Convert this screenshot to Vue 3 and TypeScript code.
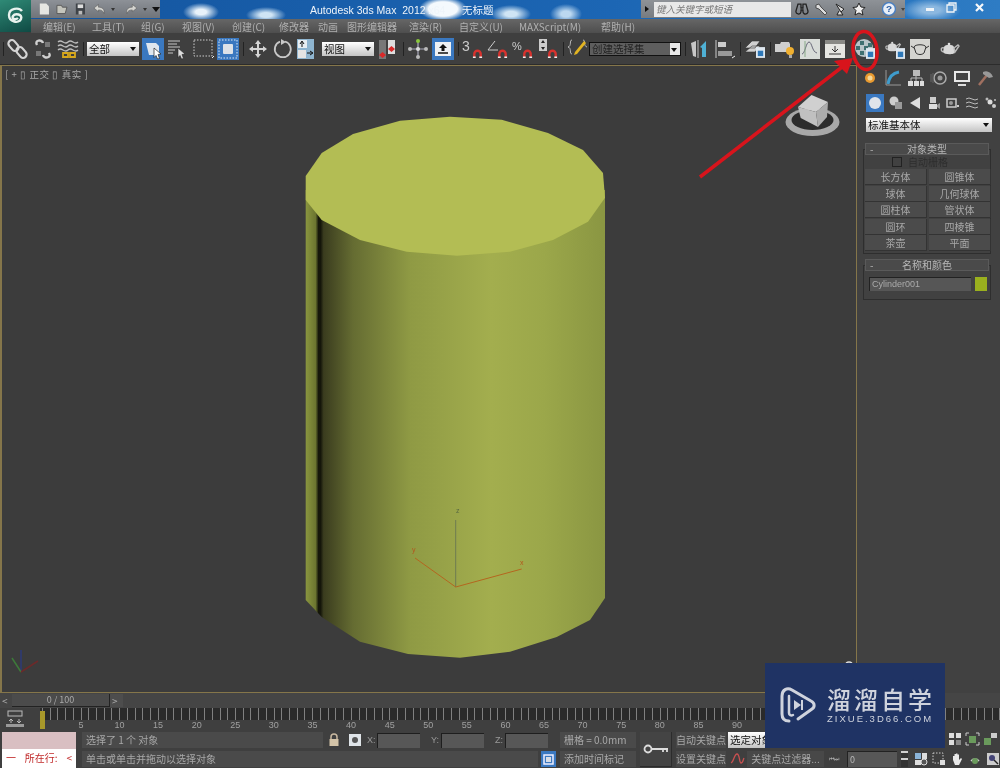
<script setup lang="ts">
interface MenuItem {
  label: string;
  width: number;
}

const menus: MenuItem[] = [
  { label: "编辑(E)", width: 49 },
  { label: "工具(T)", width: 49 },
  { label: "组(G)", width: 41 },
  { label: "视图(V)", width: 50 },
  { label: "创建(C)", width: 47 },
  { label: "修改器", width: 39 },
  { label: "动画", width: 29 },
  { label: "图形编辑器", width: 62 },
  { label: "渲染(R)", width: 50 },
  { label: "自定义(U)", width: 60 },
  { label: "MAXScript(M)", width: 82 },
  { label: "帮助(H)", width: 40 },
];

const objectTypes = ["长方体", "圆锥体", "球体", "几何球体", "圆柱体", "管状体", "圆环", "四棱锥", "茶壶", "平面"];

const rulerLabels = [0, 5, 10, 15, 20, 25, 30, 35, 40, 45, 50, 55, 60, 65, 70, 75, 80, 85, 90, 95, 100];

const topFace =
  "305.7,176 321.7,153 353,134 400,120.7 450,116.7 501.7,119.7 548,133 583,150 603,173 605,197.7 588,221.7 553,240 510,251.7 457,255.7 406.7,251.7 360,240 321.7,220 305.7,200";
const body =
  "305.7,190 605,190 605,598 590,620 556.7,637 510,651.7 460,657.7 408,654 360,641.7 321.7,617 305.7,600";
</script>

<template>
  <div class="app">
    <svg class="defs" width="0" height="0">
      <symbol id="magnet" viewBox="0 0 12 12">
        <path d="M2.5 11V6.5a3.5 3.5 0 0 1 7 0V11" fill="none" stroke="#d8322e" stroke-width="2.6" />
        <path d="M1 10h3M8 10h3" stroke="#eee" stroke-width="1.6" />
      </symbol>
      <symbol id="teapot" viewBox="0 0 22 22">
        <path d="M5 9c1-3 9-3 10 0l1 5c0 3-11 3-12 0z" fill="#d8d8d8" />
        <path d="M15 10l4-3 1 1-4 6zM5 10c-3-1-4 2-1 4" fill="none" stroke="#bbb" stroke-width="1.4" />
        <circle cx="10" cy="6" r="1.3" fill="#ddd" />
      </symbol>
      <symbol id="page" viewBox="0 0 10 12">
        <rect width="10" height="12" fill="#dfe8f0" />
        <rect x="2" y="4" width="6" height="6" fill="#2e78b8" />
      </symbol>
    </svg>

    <div class="top">
      <div class="app-button">
        <svg width="24" height="22" viewBox="0 0 24 22">
          <path d="M18 6c-3-4-13-3-13 4s10 9 12 4-6-6-8-3 3 4 5 2" fill="none" stroke="#e8f2ee" stroke-width="2.4" />
        </svg>
      </div>
      <div class="top-right">
        <div class="titlebar">
          <div class="quick">
            <svg class="qa" width="14" height="14" viewBox="0 0 14 14"><path d="M2 1h7l3 3v9H2z" fill="#e6e6e2" /></svg>
            <svg class="qa" width="14" height="14" viewBox="0 0 14 14"><path d="M1 3h5l1 2h5l-2 7H1z" fill="#c4c4bc" stroke="#555" /></svg>
            <svg class="qa" width="14" height="14" viewBox="0 0 14 14"><path d="M2 1h10v12H2z" fill="#3f4348" /><path d="M4 2h6v4H4z" fill="#ddd" /><path d="M5 9h4v4H5z" fill="#bbb" /></svg>
            <svg class="qa wide" width="14" height="14" viewBox="0 0 14 14"><path d="M1 6l5-4v3c4 0 7 2 6 7-1-3-3-4-6-4v2z" fill="#d4d4d0" stroke="#555" stroke-width=".6" /></svg>
            <span class="qa-drop"></span>
            <svg class="qa wide" width="14" height="14" viewBox="0 0 14 14"><path d="M13 6L8 2v3C4 5 1 7 2 12c1-3 3-4 6-4v2z" fill="#d4d4d0" stroke="#555" stroke-width=".6" /></svg>
            <span class="qa-drop"></span>
            <span class="qa-menu"></span>
          </div>
          <div class="title">
            <span class="title-app">Autodesk 3ds Max&nbsp; 2012 x64</span>
            <span class="title-doc">无标题</span>
          </div>
          <div class="info">
            <span class="info-arrow"></span>
            <div class="search">键入关键字或短语</div>
            <svg class="info-ic" width="14" height="14" viewBox="0 0 14 14"><path d="M3 2h3v4h2V2h3l2 7a2.500 2.500 0 0 1-5 1V8H6v2a2.500 2.500 0 0 1-5-1z" fill="none" stroke="#222" stroke-width="1.300" /></svg>
            <svg class="info-ic" width="14" height="14" viewBox="0 0 14 14"><path d="M2 3l3-1 2 3 6 6-2 2-6-6-3-1z" fill="#ddd" stroke="#333" stroke-width=".8" /></svg>
            <svg class="info-ic" width="14" height="14" viewBox="0 0 14 14"><path d="M3 2l8 5-3 3zM6 9l-2 4h6l-2-3" fill="#ddd" stroke="#222" /></svg>
            <svg class="info-ic" width="14" height="14" viewBox="0 0 14 14"><path d="M7 1l2 4 4 .5-3 3 1 4.500-4-2-4 2 1-4.500-3-3L5 5z" fill="#eee" stroke="#222" /></svg>
            <svg class="help" width="14" height="14" viewBox="0 0 14 14">
              <circle cx="7" cy="7" r="6.500" fill="#e8eef6" stroke="#4b7fc0" stroke-width="1.400" />
              <text x="7" y="10.500" text-anchor="middle" class="help-q">?</text>
            </svg>
            <span class="help-drop"></span>
          </div>
          <div class="window-buttons">
            <svg width="95" height="14" viewBox="0 0 95 14">
              <rect x="21" y="7" width="8" height="3" fill="#f0f4f8" />
              <path d="M42 4h7v7h-7zM44 4V2h7v7h-2" fill="none" stroke="#f0f4f8" stroke-width="1.300" />
              <path d="M71 3l7 7M78 3l-7 7" stroke="#f6f8fa" stroke-width="2.200" />
            </svg>
          </div>
        </div>
        <div class="menubar">
          <span v-for="m in menus" :key="m.label" class="menu-item" :style="{ width: m.width + 'px' }">{{ m.label }}</span>
        </div>
      </div>
    </div>

    <div class="toolbar">
      <span class="sep sep-first"></span>
      <svg class="tool" viewBox="0 0 22 22"><g fill="none" stroke="#d4d4d4" stroke-width="2.200"><rect x="3" y="1.500" width="7" height="12" rx="3.500" transform="rotate(-40 6.500 7.500)" /><rect x="11" y="8.500" width="7" height="12" rx="3.500" transform="rotate(-40 14.500 14.500)" /></g></svg>
      <svg class="tool" viewBox="0 0 22 22"><path d="M5 7C2 2 10 1 11 5M17 15c3 5-5 6-6 2" fill="none" stroke="#d0d0d0" stroke-width="2.400" /><path d="M13 4h5v5h-5zM4 13h5v5H4z" fill="#777" /></svg>
      <svg class="tool" viewBox="0 0 22 22"><path d="M1 4q2-2 5 0t5 0 5 0 5 0M1 8q2-2 5 0t5 0 5 0 5 0M1 12q2-2 5 0t5 0 5 0 5 0" fill="none" stroke="#bdbdbd" stroke-width="1.300" /><path d="M6 15h5v4H6zM13 15h5v4h-5z" fill="none" stroke="#d8a81c" stroke-width="1.800" /></svg>
      <span class="sep"></span>
      <div class="combo combo-all">全部<i class="caret"></i></div>
      <span class="active">
        <svg class="tool" viewBox="0 0 22 22"><path d="M4 5h10l3 3v9H7z" fill="#dfe6ee" /><path d="M12 10l7 6-3 .5 1.500 4-2 .5-1.500-3.500-2 2z" fill="#fff" stroke="#222" stroke-width=".7" /></svg>
      </span>
      <svg class="tool" viewBox="0 0 22 22"><path d="M1 3h12M1 6h9M1 9h12M1 12h7M1 15h5" stroke="#c8c8c8" stroke-width="1.200" /><path d="M11 10l7 6-3 .5 1.500 4-2 .5-1.500-3.500-2 2z" fill="#ddd" stroke="#222" stroke-width=".6" /></svg>
      <svg class="tool" viewBox="0 0 22 22"><rect x="2" y="2" width="18" height="16" fill="none" stroke="#ccc" stroke-dasharray="1.500 1.500" /><path d="M20 20l2-2" stroke="#eee" /></svg>
      <span class="active">
        <svg class="tool" viewBox="0 0 22 22"><rect x="2" y="2" width="18" height="18" fill="none" stroke="#dce8f4" stroke-dasharray="1.500 1.500" /><rect x="6" y="6" width="10" height="10" rx="1" fill="#dde2e8" /></svg>
      </span>
      <span class="sep"></span>
      <svg class="tool" viewBox="0 0 22 22"><path d="M11 2l3 4h-2v4h4V8l4 3-4 3v-2h-4v4h2l-3 4-3-4h2v-4H6v2l-4-3 4-3v2h4V6H8z" fill="#d4d4d4" /></svg>
      <svg class="tool" viewBox="0 0 22 22"><path d="M13 3.500a8 8 0 1 1-5 .2" fill="none" stroke="#c8c8c8" stroke-width="1.800" /><path d="M9 1l5 3-5 3z" fill="#c8c8c8" /></svg>
      <svg class="tool" viewBox="0 0 22 22"><rect x="0" y="1" width="17" height="20" fill="#8fb5d0" /><rect x="1" y="2" width="9" height="8" fill="#e8eef2" /><rect x="1" y="12" width="8" height="8" fill="#e4e4e4" /><path d="M5 9V4M3 6l2-3 2 3M10 15h5M13 13l3 2-3 2" stroke="#111" fill="none" /></svg>
      <div class="combo combo-view">视图<i class="caret"></i></div>
      <svg class="tool" viewBox="0 0 22 22"><rect x="2" y="2" width="7" height="19" fill="#777" /><rect x="11" y="2" width="7" height="14" fill="#ddd" /><path d="M2 17l3.500-3 3.500 3-3.500 3zM11 11l3.500-3 3.500 3-3.500 3z" fill="#d82a2a" /></svg>
      <span class="sep"></span>
      <svg class="tool" viewBox="0 0 22 22"><path d="M11 3v16M3 11h16" stroke="#aab" stroke-width="1.200" /><circle cx="11" cy="3" r="2" fill="#8ac83c" /><circle cx="3" cy="11" r="2" fill="#bbb" /><circle cx="19" cy="11" r="2" fill="#bbb" /><circle cx="11" cy="11" r="2" fill="#ddd" /><circle cx="11" cy="19" r="2" fill="#bbb" /></svg>
      <span class="active">
        <svg class="tool" viewBox="0 0 22 22"><rect x="3" y="4" width="16" height="14" fill="#eef1f4" /><path d="M11 6l4 4h-2.500v3h-3v-3H7z" fill="#111" /><path d="M6 15h10" stroke="#111" stroke-width="1.500" /></svg>
      </span>
      <span class="sep"></span>
      <div class="snap"><span class="snap-num">3</span><svg class="snap-magnet" viewBox="0 0 12 12"><use href="#magnet" /></svg></div>
      <div class="snap"><svg class="snap-glyph" viewBox="0 0 12 12"><path d="M1 11L8 2M1 11h10" stroke="#ccc" fill="none" /></svg><svg class="snap-magnet" viewBox="0 0 12 12"><use href="#magnet" /></svg></div>
      <div class="snap"><span class="snap-num small">%</span><svg class="snap-magnet" viewBox="0 0 12 12"><use href="#magnet" /></svg></div>
      <div class="snap"><svg class="snap-glyph" viewBox="0 0 12 12"><path d="M2 0h8v12H2z" fill="#ccc" /><path d="M6 1l2 3H4zM6 11L4 8h4z" fill="#222" /></svg><svg class="snap-magnet" viewBox="0 0 12 12"><use href="#magnet" /></svg></div>
      <span class="sep"></span>
      <svg class="tool" viewBox="0 0 22 22"><path d="M5 2C2 2 5 8 1 9c4 1 1 7 4 7M16 2c3 0 0 6 4 7" fill="none" stroke="#bbb" /><path d="M8 14L17 3l2 2-9 11-3 1z" fill="#e2b422" /></svg>
      <div class="combo combo-set">创建选择集<i class="caret"></i></div>
      <span class="sep"></span>
      <svg class="tool" viewBox="0 0 22 22"><path d="M2 5l5-2v16l-3-1z" fill="#c8c8c8" /><path d="M9 2v18" stroke="#bbb" /><path d="M17 3l-6 6 2 1v9h4z" fill="#4fb0d4" /></svg>
      <svg class="tool" viewBox="0 0 22 22"><path d="M2 2v18" stroke="#ccc" /><rect x="4" y="4" width="8" height="5" fill="#ccc" /><rect x="4" y="13" width="14" height="5" fill="#999" /><path d="M18 20l3-2" stroke="#eee" /></svg>
      <span class="sep"></span>
      <svg class="tool" viewBox="0 0 22 22"><path d="M1 10l7-7h8l-5 7zM1 14l7-6h8l-5 6z" fill="#d0d0d0" stroke="#333" stroke-width=".6" /><use href="#page" x="12" y="9" width="9" height="11" /></svg>
      <span class="sep"></span>
      <svg class="tool" viewBox="0 0 22 22"><path d="M1 6h5l1-2h8l1 2v8H1z" fill="#cfcfcf" /><circle cx="16" cy="13" r="4" fill="#f0b030" /><rect x="15" y="17" width="3" height="3" fill="#aaa" /></svg>
      <svg class="tool" viewBox="0 0 22 22"><rect x="1" y="1" width="20" height="20" fill="#d8dcd8" /><path d="M3 16c3 0 4-12 7-12s3 10 8 11" fill="none" stroke="#667" /><path d="M6 3v16" stroke="#8a8" /></svg>
      <svg class="tool" viewBox="0 0 22 22"><rect x="1" y="2" width="20" height="18" fill="#e6e6e2" /><rect x="1" y="2" width="20" height="4" fill="#8a8a86" /><path d="M11 8v5M8 11l3 3 3-3M5 16h12" stroke="#333" fill="none" /></svg>
      <svg class="tool tool-mat" viewBox="0 0 22 22">
        <circle cx="10" cy="10" r="9" fill="#b8c4c8" />
        <path d="M6 3h4v4H6zM14 5h4v4h-4zM2 8h4v4H2zM10 8h4v4h-4zM6 13h4v4H6zM14 13h3v3h-3z" fill="#3f6f70" />
        <use href="#page" x="12" y="10" width="9" height="11" />
      </svg>
      <svg class="tool tool-render" viewBox="0 0 22 22"><use href="#teapot" width="18" height="18" /><use href="#page" x="12" y="10" width="9" height="11" /></svg>
      <svg class="tool" viewBox="0 0 22 22"><rect x="1" y="1" width="20" height="20" fill="#d4d4d0" /><path d="M5 9c1-3 11-3 12 0l-2 6c-2 2-6 2-8 0zM5 10L2 8M17 10l3-2" fill="none" stroke="#333" /></svg>
      <svg class="tool tool-pot" viewBox="0 0 22 22"><use href="#teapot" width="22" height="22" /></svg>
    </div>

    <div class="main">
      <div class="viewport">
        <svg class="scene" viewBox="0 65 857 628">
          <defs>
            <linearGradient id="side" gradientUnits="userSpaceOnUse" x1="305" y1="0" x2="605" y2="0">
              <stop offset="0" stop-color="#8c9840" />
              <stop offset=".035" stop-color="#6c7530" />
              <stop offset=".045" stop-color="#15160a" />
              <stop offset=".052" stop-color="#15160a" />
              <stop offset=".062" stop-color="#3a3c1e" />
              <stop offset=".16" stop-color="#656c32" />
              <stop offset=".35" stop-color="#8f9a44" />
              <stop offset=".62" stop-color="#a3ae4e" />
              <stop offset=".8" stop-color="#9ba74a" />
              <stop offset="1" stop-color="#8a9642" />
            </linearGradient>
          </defs>
          <polygon :points="body" fill="url(#side)" />
          <polygon :points="topFace" fill="#b3bd54" />
          <path d="M455.700 587V520" stroke="#6e7c50" />
          <path d="M415 558l40.700 29 66-18" fill="none" stroke="#b4661f" />
          <text x="456" y="513" class="axis-z">z</text>
          <text x="412" y="552" class="axis-o">y</text>
          <text x="520" y="565" class="axis-o">x</text>

          <ellipse cx="812.500" cy="122" rx="27" ry="14" fill="#a8a8a8" />
          <ellipse cx="812.500" cy="120" rx="21" ry="10" fill="#2c2c2c" />
          <polygon points="811.500,95 828,102 816,112 798,107" fill="#d0d0d0" />
          <polygon points="798,107 816,112 818,127 800.700,118" fill="#c0c0c0" />
          <polygon points="816,112 828,102 827,117 818,127" fill="#adadad" />

          <path d="M21 672v-22" stroke="#2c3a78" stroke-width="1.500" />
          <path d="M21 672l-9-14" stroke="#3d7a3a" stroke-width="1.500" />
          <path d="M21 672l17-11" stroke="#6c2a2a" stroke-width="1.500" />
          <path d="M846 663q3-2 6 0" stroke="#ddd" stroke-width="1.500" fill="none" />
        </svg>
        <div class="view-label">[ + ▯ 正交 ▯ 真实 ]</div>
      </div>

      <div class="panel">
        <div class="panel-tabs">
          <svg class="tab" viewBox="0 0 18 18"><circle cx="9" cy="9" r="5" fill="#e89a30" /><circle cx="9" cy="9" r="2.500" fill="#f4d898" /></svg>
          <svg class="tab" viewBox="0 0 18 18"><path d="M2 1v15h15" fill="none" stroke="#999" /><path d="M4 15C5 8 9 4 15 3" fill="none" stroke="#3f9ccc" stroke-width="3" /></svg>
          <svg class="tab" viewBox="0 0 18 18"><rect x="6" y="1" width="7" height="6" fill="#bbb" /><rect x="1" y="12" width="5" height="5" fill="#ddd" /><rect x="7" y="12" width="5" height="5" fill="#ddd" /><rect x="13" y="12" width="4" height="5" fill="#ddd" /><path d="M9 7v5M4 12V9h11v3" stroke="#bbb" fill="none" /></svg>
          <svg class="tab" viewBox="0 0 18 18"><circle cx="10" cy="9" r="6" fill="none" stroke="#aaa" stroke-width="1.500" /><circle cx="10" cy="9" r="2.500" fill="#999" /><path d="M1 5v8M3 4v10" stroke="#666" /></svg>
          <svg class="tab" viewBox="0 0 18 18"><rect x="1" y="2" width="16" height="11" fill="#e8e8e8" /><rect x="3" y="4" width="12" height="7" fill="#444" /><path d="M5 16h8" stroke="#ddd" stroke-width="2" /></svg>
          <svg class="tab" viewBox="0 0 18 18"><path d="M3 16L11 6" stroke="#a07060" stroke-width="2.500" /><path d="M7 3c4-2 8 0 10 5l-4 1-6-4z" fill="#999" /></svg>
        </div>
        <div class="panel-sub">
          <span class="sub-active"><svg class="sub" viewBox="0 0 14 14"><circle cx="7" cy="7" r="6" fill="#dfe4ea" /></svg></span>
          <svg class="sub" viewBox="0 0 14 14"><circle cx="5" cy="5" r="4.500" fill="#ccc" /><rect x="6" y="6" width="7" height="7" fill="#999" /></svg>
          <svg class="sub" viewBox="0 0 14 14"><path d="M2 7l10-6v12z" fill="#ddd" /></svg>
          <svg class="sub" viewBox="0 0 14 14"><rect x="3" y="1" width="6" height="6" fill="#ccc" /><rect x="2" y="8" width="8" height="5" fill="#ddd" /><path d="M10 9l3-2v6l-3-2z" fill="#999" /></svg>
          <svg class="sub" viewBox="0 0 14 14"><rect x="1" y="3" width="9" height="8" fill="none" stroke="#ccc" stroke-width="1.500" /><circle cx="5" cy="7" r="2" fill="#999" /><rect x="11" y="9" width="2" height="2" fill="#ccc" /></svg>
          <svg class="sub" viewBox="0 0 14 14"><path d="M1 3q3-2 6 0t6 0M1 7q3-2 6 0t6 0M1 11q3-2 6 0t6 0" fill="none" stroke="#bbb" /></svg>
          <svg class="sub" viewBox="0 0 14 14"><circle cx="6" cy="6" r="2.500" fill="#ddd" /><circle cx="10" cy="10" r="2" fill="#ccc" /><circle cx="3" cy="3" r="1.500" fill="#bbb" /><circle cx="11" cy="4" r="1" fill="#bbb" /></svg>
        </div>
        <div class="combo combo-prim">标准基本体<i class="caret"></i></div>

        <div class="rollout">
          <div class="rollout-head"><span class="minus">-</span>对象类型</div>
          <div class="rollout-body">
            <label class="autogrid"><i class="check"></i>自动栅格</label>
            <div class="type-grid">
              <span v-for="t in objectTypes" :key="t" class="type-btn">{{ t }}</span>
            </div>
          </div>
        </div>

        <div class="rollout rollout-name">
          <div class="rollout-head"><span class="minus">-</span>名称和颜色</div>
          <div class="rollout-body name-body">
            <div class="name-input">Cylinder001</div>
            <div class="swatch"></div>
          </div>
        </div>
      </div>
    </div>

    <div class="slider-row">
      <span class="slider-arrow">&lt;</span>
      <div class="slider-box">0 / 100</div>
      <span class="slider-arrow right">&gt;</span>
    </div>

    <div class="timeline">
      <svg class="track-icon" width="20" height="18" viewBox="0 0 20 18">
        <rect x="3" y="1" width="14" height="5" fill="none" stroke="#bbb" />
        <path d="M6 9v4M4 11l2-2 2 2M14 9v4M12 11l2 2 2-2" stroke="#bbb" fill="none" />
        <rect x="1" y="14" width="18" height="3" fill="#999" />
      </svg>
      <div class="ruler">
        <div class="ticks"><span class="thumb"></span></div>
        <div class="ruler-labels">
          <span v-for="n in rulerLabels" :key="n" class="ruler-label">{{ n }}</span>
        </div>
      </div>
    </div>

    <div class="status">
      <div class="listener">
        <div class="listener-top"></div>
        <div class="listener-bottom"><span>一</span><span>所在行:</span><span>&lt;</span></div>
      </div>
      <div class="status-mid">
        <div class="status-row">
          <div class="field status-text">选择了 1 个 对象</div>
          <svg class="lock" width="12" height="14" viewBox="0 0 12 14"><path d="M3 6V4a3 3 0 0 1 6 0v2" fill="none" stroke="#c8b8a0" stroke-width="1.500" /><rect x="1.500" y="6" width="9" height="7" fill="#d4c4a8" /></svg>
          <svg class="abs" width="12" height="12" viewBox="0 0 12 12"><rect width="12" height="12" fill="#dfe4e8" /><circle cx="6" cy="6" r="3" fill="#555" /></svg>
          <span class="coord-label coord-x">X:</span><div class="coord"></div>
          <span class="coord-label">Y:</span><div class="coord"></div>
          <span class="coord-label">Z:</span><div class="coord"></div>
        </div>
        <div class="status-row">
          <div class="field prompt">单击或单击并拖动以选择对象</div>
          <span class="time-tag"><svg width="11" height="11" viewBox="0 0 11 11"><rect x="1" y="1" width="9" height="9" fill="none" stroke="#eef" stroke-width="1.500" /><rect x="3" y="3" width="5" height="5" fill="#d8dce4" /></svg></span>
        </div>
      </div>
      <div class="status-col grid-col">
        <div class="field">栅格 = 0.0mm</div>
        <div class="field">添加时间标记</div>
      </div>
      <div class="key-btn">
        <svg width="26" height="10" viewBox="0 0 26 10"><circle cx="5" cy="5" r="3.500" fill="none" stroke="#ddd" stroke-width="1.800" /><path d="M9 5h16M20 5v3M24 5v3" stroke="#ddd" stroke-width="1.800" /></svg>
      </div>
      <div class="status-col key-col">
        <div class="key-label">自动关键点</div>
        <div class="key-label">设置关键点</div>
      </div>
      <div class="status-col filter-col">
        <div class="combo combo-key">选定对象</div>
        <div class="filter-row">
          <svg width="16" height="15" viewBox="0 0 16 15"><path d="M1 11c3-1 3-9 6-9s2 9 4 9 2-3 3-5" fill="none" stroke="#c85050" stroke-width="1.300" /></svg>
          <div class="filter-btn">关键点过滤器...</div>
        </div>
      </div>
      <div class="status-col nav-col">
        <div class="nav-top">
          <svg width="14" height="14" viewBox="0 0 14 14"><path d="M1 1h5v5H1zM8 1h5v5H8zM1 8h5v5H1z" fill="#ddd" /><path d="M8 8h5v5H8z" fill="#888" /></svg>
          <svg width="15" height="14" viewBox="0 0 15 14"><path d="M1 4V1h3M11 1h3v3M1 10v3h3M14 10v3h-3" fill="none" stroke="#ccc" /><rect x="4" y="4" width="7" height="7" fill="#6a9a5c" /></svg>
          <svg width="15" height="14" viewBox="0 0 15 14"><rect x="1" y="6" width="7" height="7" fill="#6a9a5c" /><rect x="8" y="1" width="6" height="5" fill="#ccc" /></svg>
        </div>
        <div class="nav-bottom">
          <span class="nav-step">⏮⏭</span>
          <div class="frame-input">0</div>
          <span class="frame-spin"></span>
          <svg width="14" height="14" viewBox="0 0 14 14"><rect x="1" y="1" width="6" height="6" fill="#8ab4d8" /><rect x="8" y="1" width="5" height="6" fill="#ddd" /><rect x="1" y="8" width="6" height="5" fill="#ddd" /><circle cx="10" cy="10" r="3" fill="#555" stroke="#ddd" /></svg>
          <svg width="14" height="14" viewBox="0 0 14 14"><rect x="1" y="1" width="10" height="10" fill="none" stroke="#ccc" stroke-dasharray="1.500 1.500" /><rect x="8" y="8" width="5" height="5" fill="#ddd" /></svg>
          <svg width="14" height="15" viewBox="0 0 14 15"><path d="M3 8V4h1.500v3V2H6v5V1.500h1.500V7V2.500H9V8l2-2 1 1-3 6H5z" fill="#e8e8e8" /></svg>
          <svg width="14" height="14" viewBox="0 0 14 14"><path d="M3 9a5 5 0 0 1 8 0" fill="none" stroke="#ccc" stroke-width="1.400" /><circle cx="7" cy="9" r="3" fill="#6a9a5c" /></svg>
          <svg width="14" height="14" viewBox="0 0 14 14"><rect x="1" y="1" width="12" height="12" fill="#ccc" /><circle cx="6" cy="6" r="3" fill="#447" /><path d="M8 8l4 4" stroke="#222" stroke-width="1.500" /></svg>
        </div>
      </div>
    </div>

    <!-- watermark and the red mark lie over the screenshot -->
    <div class="watermark">
      <svg class="wm-logo" width="36" height="38" viewBox="0 0 36 38">
        <path d="M9 35C4 35 2 32 2 28V10C2 4 7 1 12 4l19 11c4 2 4 6 1 8L18 33" fill="none" stroke="#cfd3dd" stroke-width="3" stroke-linecap="round" />
        <path d="M9 10v17c0 2 2 3 4 2" fill="none" stroke="#cfd3dd" stroke-width="2.500" stroke-linecap="round" />
        <path d="M14 14l7 5-7 5z" fill="#cfd3dd" />
        <path d="M22 14v10" stroke="#cfd3dd" stroke-width="2" />
      </svg>
      <div class="wm-text">
        <div class="wm-name">溜溜自学</div>
        <div class="wm-url">ZIXUE.3D66.COM</div>
      </div>
    </div>
    <svg class="mark" viewBox="0 0 1000 768">
      <path d="M700 177L846 64" stroke="#d8141c" stroke-width="3.500" />
      <path d="M853 58l-19 3 13 13z" fill="#d8141c" />
      <ellipse cx="865" cy="50.500" rx="12" ry="19" fill="none" stroke="#d8141c" stroke-width="3.500" transform="rotate(-6 865 50)" />
    </svg>
  </div>
</template>

<style>
body {
  margin: 0;
  background: #3d3d3d;
}
</style>

<style scoped>
.app {
  position: relative;
  width: 1000px;
  height: 768px;
  overflow: hidden;
  display: flex;
  flex-direction: column;
  background: #3d3d3d;
  color: #a8a8a8;
  font-family: "Noto Sans CJK SC", "Liberation Sans", sans-serif;
  font-size: 10px;
  filter: blur(0.35px);
}

.defs {
  position: absolute;
}

.top {
  display: flex;
  flex: none;
  height: 33px;
}

.app-button {
  display: flex;
  align-items: center;
  justify-content: center;
  width: 31px;
  height: 32px;
  background: linear-gradient(160deg, #2f8a76, #0f4a44);
}

.top-right {
  flex: 1;
  display: flex;
  flex-direction: column;
  min-width: 0;
}

.titlebar {
  display: flex;
  height: 19px;
  background:
    radial-gradient(ellipse 18px 9px at 170px 12px, #e8f2fa 30%, transparent 100%),
    radial-gradient(ellipse 20px 8px at 235px 15px, #cfe4f4 30%, transparent 100%),
    radial-gradient(ellipse 24px 12px at 412px 9px, #f4f9fd 60%, transparent 100%),
    radial-gradient(ellipse 20px 9px at 480px 14px, #cfe4f4 30%, transparent 100%),
    radial-gradient(ellipse 16px 10px at 535px 14px, #bcd8f0 30%, transparent 100%),
    radial-gradient(ellipse 30px 12px at 900px 10px, #8cb8e0 30%, transparent 100%),
    linear-gradient(90deg, #14559f, #1c66b4 60%, #2e7cc4);
}

.quick {
  display: flex;
  align-items: center;
  flex: none;
  width: 129px;
  height: 18px;
  padding-left: 7px;
  box-sizing: border-box;
  background: linear-gradient(#8d9197, #70747a);
}

.qa {
  margin-right: 5px;
}

.qa.wide {
  margin-left: 2px;
  margin-right: 3px;
}

.qa-drop {
  width: 0;
  height: 0;
  margin: 0 8px 0 2px;
  border-top: 3px solid #333;
  border-left: 2px solid transparent;
  border-right: 2px solid transparent;
}

.qa-menu {
  width: 0;
  height: 0;
  margin-left: -3px;
  border-top: 5px solid #111;
  border-left: 4px solid transparent;
  border-right: 4px solid transparent;
}

.title {
  flex: 1;
  display: flex;
  align-items: center;
  height: 19px;
  padding-left: 150px;
  color: #eef4fa;
  font-size: 10.500px;
  white-space: nowrap;
  overflow: hidden;
}

.title-app {
  width: 152px;
  flex-shrink: 0;
  font-family: "Liberation Sans", sans-serif;
}

.info {
  display: flex;
  align-items: center;
  flex: none;
  width: 264px;
  height: 18px;
  background: linear-gradient(#8e9297, #777b80);
}

.info-arrow {
  width: 0;
  height: 0;
  margin: 0 5px 0 4px;
  border-left: 4px solid #111;
  border-top: 3px solid transparent;
  border-bottom: 3px solid transparent;
}

.search {
  width: 138px;
  height: 15px;
  margin-right: 4px;
  padding-left: 2px;
  box-sizing: border-box;
  background: #e8e8e8;
  color: #777;
  font-size: 9.500px;
  font-style: italic;
  line-height: 15px;
}

.info-ic {
  margin-right: 5px;
}

.help {
  margin-left: 11px;
}

.help-q {
  fill: #2a5ea8;
  font-size: 10px;
  font-weight: 700;
  font-family: "Liberation Sans", sans-serif;
}

.help-drop {
  width: 0;
  height: 0;
  margin-left: 5px;
  border-top: 3px solid #444;
  border-left: 2px solid transparent;
  border-right: 2px solid transparent;
}

.window-buttons {
  flex: none;
  width: 95px;
  padding-top: 1px;
}

.menubar {
  display: flex;
  align-items: center;
  height: 14px;
  padding-left: 12px;
  background: linear-gradient(#666, #4e4e4e);
  color: #b0b0b0;
  white-space: nowrap;
}

.menu-item {
  flex-shrink: 0;
}

.toolbar {
  display: flex;
  align-items: center;
  flex: none;
  gap: 3px;
  height: 32px;
  padding-left: 3px;
  background: #3f3f3f;
  border-bottom: 1px solid #2c2c2c;
  box-sizing: border-box;
  white-space: nowrap;
}

.tool {
  display: block;
  flex-shrink: 0;
  width: 22px;
  height: 22px;
}

.tool-mat {
  margin-left: 5px;
}

.tool-render {
  margin-left: 5px;
}

.tool-pot {
  margin-left: 5px;
}

.sep {
  flex-shrink: 0;
  width: 1px;
  height: 14px;
  margin-left: 1px;
  background: #222;
}

.sep-first {
  margin-left: 0;
  margin-right: 0;
}

.active {
  flex-shrink: 0;
  background: #3a78c0;
}

.combo {
  position: relative;
  flex-shrink: 0;
  height: 14px;
  padding-left: 2px;
  box-sizing: border-box;
  background: linear-gradient(#fff, #c4c4c4);
  color: #111;
  font-size: 10.500px;
  line-height: 14px;
}

.caret {
  position: absolute;
  right: 3px;
  top: 5px;
  width: 0;
  height: 0;
  border-top: 4px solid #111;
  border-left: 3px solid transparent;
  border-right: 3px solid transparent;
}

.combo-all {
  width: 52px;
}

.combo-view {
  width: 52px;
}

.combo-set {
  width: 92px;
  margin-left: -3px;
  background: linear-gradient(90deg, #5e5e5e 0 80px, #e8e8e8 80px);
  border: 1px solid #111;
  color: #222;
  line-height: 12px;
}

.snap {
  position: relative;
  flex-shrink: 0;
  width: 22px;
  height: 22px;
}

.snap-num {
  position: absolute;
  left: 0;
  top: 0;
  color: #ccc;
  font-family: "Liberation Sans", sans-serif;
  font-size: 14px;
  line-height: 16px;
}

.snap-num.small {
  font-size: 11px;
}

.snap-glyph {
  position: absolute;
  left: 0;
  top: 1px;
  width: 12px;
  height: 12px;
}

.snap-magnet {
  position: absolute;
  right: 1px;
  bottom: 1px;
  width: 11px;
  height: 11px;
}

.main {
  flex: 1;
  display: flex;
  min-height: 0;
}

.viewport {
  position: relative;
  width: 857px;
  box-sizing: border-box;
  background: #3c3c3c;
}

.scene {
  display: block;
  width: 857px;
  height: 628px;
}

.viewport::after {
  content: "";
  position: absolute;
  inset: 0;
  border: 1px solid #85764a;
  border-left-width: 2px;
  pointer-events: none;
}

.axis-z,
.axis-o {
  font-family: "Liberation Sans", sans-serif;
  font-size: 7px;
}

.axis-z {
  fill: #5a6a40;
}

.axis-o {
  fill: #b4561c;
}

.view-label {
  position: absolute;
  left: 5px;
  top: 2px;
  color: #a8a8a8;
  font-size: 9.500px;
  letter-spacing: 0.600px;
}

.panel {
  width: 143px;
  padding-left: 4px;
  box-sizing: border-box;
  background: #414141;
}

.panel-tabs {
  display: flex;
  gap: 5px;
  align-items: center;
  height: 20px;
  margin-top: 3px;
}

.tab {
  width: 18px;
  height: 18px;
}

.panel-sub {
  display: flex;
  align-items: center;
  gap: 5px;
  height: 18px;
  margin-top: 6px;
  padding-left: 5px;
}

.sub-active {
  display: flex;
  padding: 2px;
  background: #3a78c0;
}

.sub {
  width: 14px;
  height: 14px;
}

.combo-prim {
  width: 126px;
  margin: 6px 0 0 5px;
}

.rollout {
  width: 128px;
  margin: 11px 0 0 2px;
}

.rollout-name {
  margin-top: 5px;
}

.rollout-head {
  position: relative;
  height: 12px;
  margin: 0 2px;
  background: #4a4a4a;
  border: 1px solid #5a5a5a;
  box-sizing: border-box;
  color: #b8b8b8;
  line-height: 10px;
  text-align: center;
}

.minus {
  position: absolute;
  left: 4px;
  top: 0;
}

.rollout-body {
  margin-top: -6px;
  padding: 4px 1px 2px;
  border: 1px solid #2e2e2e;
}

.autogrid {
  display: flex;
  align-items: center;
  height: 15px;
  padding-left: 27px;
  color: #2e2e2e;
}

.check {
  width: 8px;
  height: 8px;
  margin-right: 6px;
  border: 1px solid #222;
}

.type-grid {
  display: grid;
  grid-template-columns: 62px 62px;
  grid-auto-rows: 16px;
  gap: 0.500px 2px;
}

.type-btn {
  background: #4b4b4b;
  border-right: 1px solid #333;
  border-bottom: 1px solid #333;
  color: #a8a8a8;
  line-height: 15px;
  text-align: center;
}

.name-body {
  display: flex;
  align-items: center;
  gap: 4px;
  height: 23px;
  box-sizing: content-box;
  padding: 6px 1px 4px 5px;
}

.name-input {
  width: 102px;
  height: 14px;
  padding-left: 2px;
  box-sizing: border-box;
  background: #565656;
  border-top: 1px solid #222;
  border-left: 1px solid #222;
  color: #aaa;
  font-family: "Liberation Sans", sans-serif;
  font-size: 9px;
  line-height: 13px;
}

.swatch {
  width: 12px;
  height: 14px;
  background: #9ab01e;
}

.slider-row {
  display: flex;
  align-items: center;
  flex: none;
  height: 15px;
  background: #454545;
  color: #aaa;
}

.slider-arrow {
  width: 12px;
  padding-left: 2px;
  box-sizing: border-box;
  line-height: 13px;
}

.slider-arrow.right {
  width: 13px;
  background: #4d4d4d;
}

.slider-box {
  width: 98px;
  height: 13px;
  background: #4b4b4b;
  border-right: 1px solid #222;
  border-bottom: 1px solid #222;
  box-sizing: border-box;
  font-size: 9px;
  line-height: 12px;
  text-align: center;
}

.timeline {
  display: flex;
  flex: none;
  height: 22px;
  background: #3f3f3f;
}

.track-icon {
  flex: none;
  margin: 2px 15px 0 5px;
}

.ruler {
  position: relative;
  flex: 1;
}

.ticks {
  position: relative;
  height: 12px;
  background:
    repeating-linear-gradient(90deg, #808080 0 1px, transparent 1px 7.720px) 2px 0,
    #2a2a2a;
}

.thumb {
  position: absolute;
  left: 0;
  top: 3px;
  width: 5px;
  height: 18px;
  background: #a8982a;
  z-index: 1;
}

.ruler-labels {
  display: flex;
  margin-left: -17px;
}

.ruler-label {
  flex: 0 0 38.600px;
  color: #a0a0a0;
  font-family: "Liberation Sans", sans-serif;
  font-size: 9px;
  line-height: 10px;
  text-align: center;
}

.status {
  display: flex;
  flex: none;
  height: 38px;
  box-sizing: border-box;
  padding-top: 2px;
  background: #3f3f3f;
}

.listener {
  width: 76px;
  margin: 0 6px 0 2px;
  background: #fff;
}

.listener-top {
  height: 17px;
  margin-bottom: 1px;
  background: #d9bfc2;
}

.listener-bottom {
  display: flex;
  justify-content: space-between;
  height: 17px;
  padding: 0 4px;
  color: #c02828;
  line-height: 16px;
}

.status-mid {
  display: flex;
  flex-direction: column;
  gap: 3px;
  flex: none;
  width: 474px;
}

.status-row {
  display: flex;
  align-items: center;
  height: 16px;
}

.field {
  height: 16px;
  padding-left: 4px;
  box-sizing: border-box;
  background: #4a4a4a;
  color: #a8a8a8;
  line-height: 16px;
  white-space: nowrap;
}

.status-text {
  width: 241px;
}

.lock {
  margin-left: 5px;
}

.abs {
  margin-left: 9px;
}

.coord-label {
  width: 10px;
  margin-left: 11px;
  color: #999;
  font-family: "Liberation Sans", sans-serif;
  font-size: 9px;
}

.coord-label.coord-x {
  margin-left: 6px;
}

.coord {
  width: 43px;
  height: 15px;
  background: #575757;
  border-top: 1px solid #1e1e1e;
  border-left: 1px solid #1e1e1e;
  box-sizing: border-box;
}

.prompt {
  width: 456px;
}

.time-tag {
  display: flex;
  align-items: center;
  justify-content: center;
  width: 15px;
  height: 16px;
  margin-left: 3px;
  background: #3a78c0;
}

.status-col {
  display: flex;
  flex-direction: column;
  gap: 3px;
}

.grid-col {
  flex: none;
  width: 76px;
  margin-left: 4px;
}

.key-btn {
  display: flex;
  align-items: center;
  justify-content: center;
  flex: none;
  width: 32px;
  height: 35px;
  margin-left: 4px;
  background: #444;
  border-right: 1px solid #2c2c2c;
  border-bottom: 1px solid #2c2c2c;
  box-sizing: border-box;
}

.key-col {
  flex: none;
  width: 50px;
  margin-left: 4px;
}

.key-label {
  height: 16px;
  background: #484848;
  color: #a8a8a8;
  line-height: 16px;
  text-align: center;
  white-space: nowrap;
}

.filter-col {
  flex: none;
  width: 96px;
  margin-left: 2px;
}

.combo-key {
  width: 60px;
  height: 16px;
  line-height: 16px;
}

.filter-row {
  display: flex;
  align-items: center;
  height: 16px;
  padding-left: 2px;
  gap: 1px;
}

.filter-btn {
  width: 77px;
  height: 16px;
  background: #484848;
  color: #a8a8a8;
  line-height: 16px;
  text-align: center;
  white-space: nowrap;
}

.nav-col {
  flex: 1;
  margin-left: 5px;
}

.nav-top {
  display: flex;
  justify-content: flex-end;
  gap: 3px;
  height: 16px;
  padding-right: 2px;
}

.nav-bottom {
  display: flex;
  align-items: center;
  gap: 4px;
  height: 16px;
}

.nav-step {
  width: 14px;
  color: #aaa;
  font-family: "DejaVu Sans", sans-serif;
  font-size: 6px;
  white-space: nowrap;
}

.frame-input {
  width: 50px;
  height: 16px;
  padding-left: 2px;
  box-sizing: border-box;
  background: #575757;
  border-top: 1px solid #222;
  border-left: 1px solid #222;
  color: #bbb;
  font-size: 9px;
  line-height: 15px;
}

.frame-spin {
  width: 7px;
  height: 16px;
  margin-right: 2px;
  background: linear-gradient(#cfcfcf 0 2px, #333 2px 7px, #cfcfcf 7px 9px, #333 9px);
}

.watermark {
  position: absolute;
  left: 765px;
  top: 663px;
  display: flex;
  align-items: center;
  width: 180px;
  height: 85px;
  padding: 0 0 2px 15px;
  box-sizing: border-box;
  background: #1f3364;
}

.wm-text {
  margin-left: 11px;
  color: #cfd3dd;
}

.wm-name {
  font-size: 24px;
  font-weight: 500;
  letter-spacing: 3px;
  line-height: 28px;
  white-space: nowrap;
}

.wm-url {
  font-family: "Liberation Sans", sans-serif;
  font-size: 9.500px;
  letter-spacing: 2px;
  line-height: 11px;
  white-space: nowrap;
}

.mark {
  position: absolute;
  left: 0;
  top: 0;
  width: 1000px;
  height: 768px;
  pointer-events: none;
}
</style>
